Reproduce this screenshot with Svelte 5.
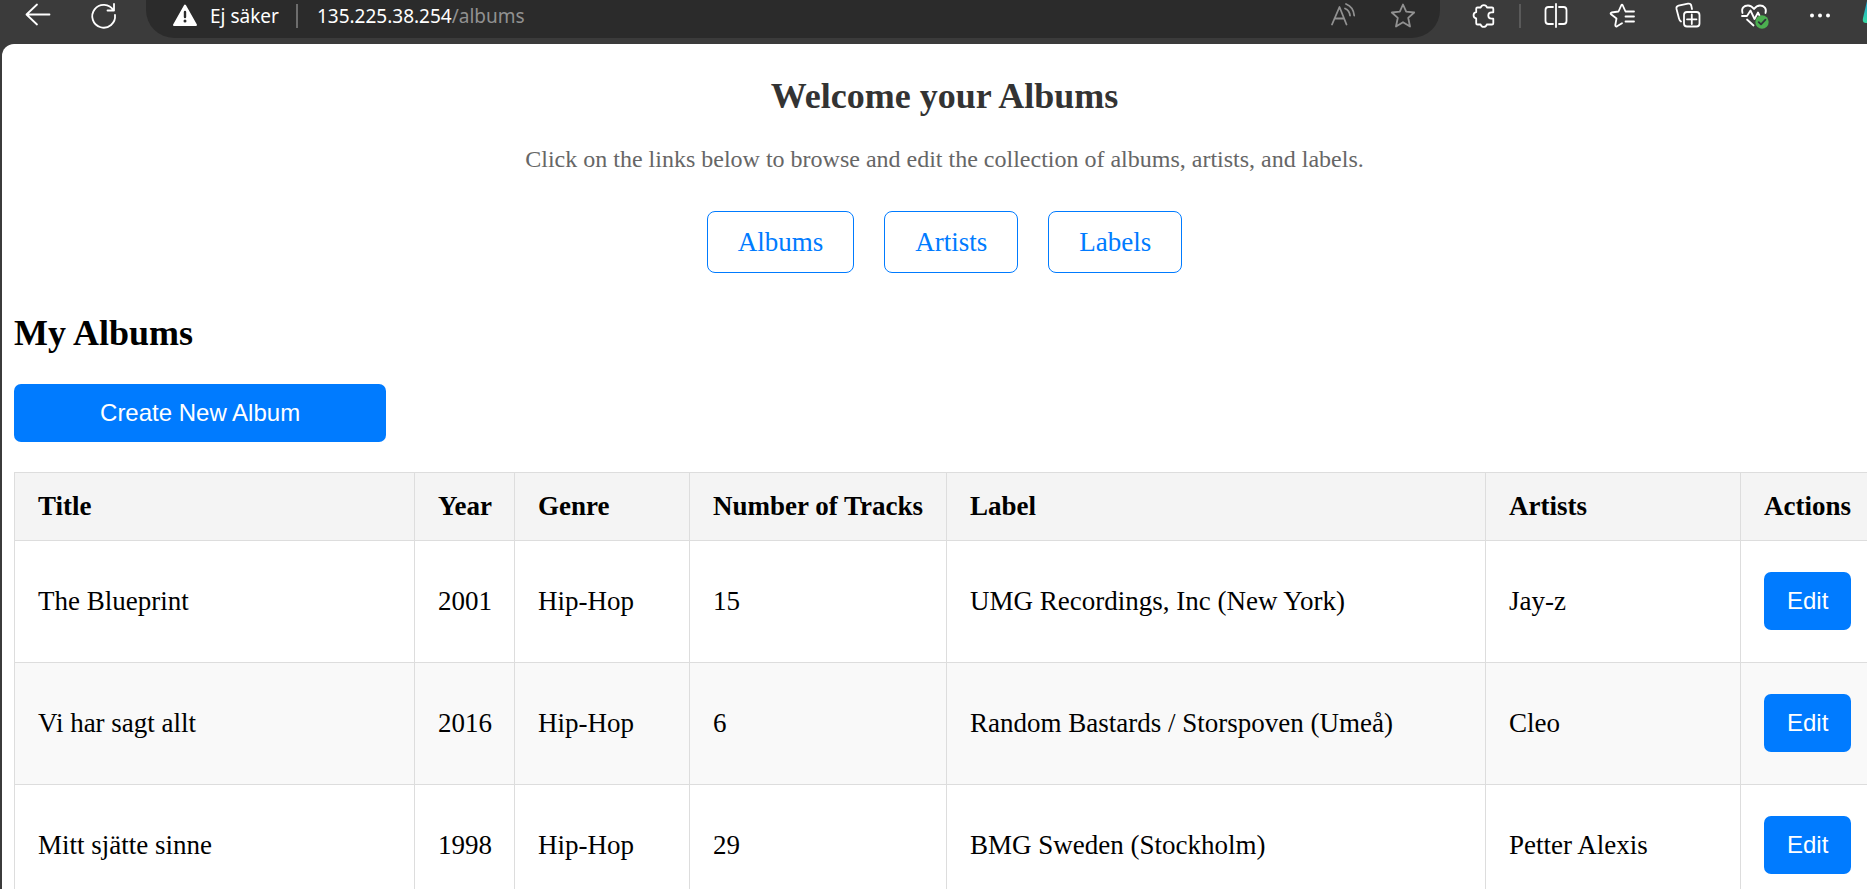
<script>
  const links = ['Albums', 'Artists', 'Labels'];
  const columns = ['Title', 'Year', 'Genre', 'Number of Tracks', 'Label', 'Artists', 'Actions'];
  const albums = [
    { title: 'The Blueprint', year: 2001, genre: 'Hip-Hop', tracks: 15, label: 'UMG Recordings, Inc (New York)', artists: 'Jay-z' },
    { title: 'Vi har sagt allt', year: 2016, genre: 'Hip-Hop', tracks: 6, label: 'Random Bastards / Storspoven (Umeå)', artists: 'Cleo' },
    { title: 'Mitt sjätte sinne', year: 1998, genre: 'Hip-Hop', tracks: 29, label: 'BMG Sweden (Stockholm)', artists: 'Petter Alexis' }
  ];
</script>

<div class="browser">
  <header class="toolbar">
    <button class="tool back" aria-label="Back">
      <svg width="30" height="30" viewBox="0 0 30 30"><path d="M27.500 14.500H4.500M15 4.500l-10.500 10L15 24.500" /></svg>
    </button>
    <button class="tool reload" aria-label="Reload">
      <svg width="30" height="30" viewBox="0 0 30 30"><path d="M25.500 10.500A11.400 11.400 0 1 0 27 15M26 4v6.500H19.500" /></svg>
    </button>
    <div class="address">
      <svg class="warning" width="26" height="26" viewBox="0 0 26 26">
        <path d="M13 4.500 24 24H2Z" fill="#fff" stroke="#fff" stroke-width="2" />
        <path d="M13 11v5" stroke="#2b2b2b" stroke-width="2.400" />
        <circle cx="13" cy="20" r="1.500" fill="#2b2b2b" stroke="none" />
      </svg>
      <span class="security">Ej säker</span>
      <span class="divider"></span>
      <span class="url">135.225.38.254<span class="path">/albums</span></span>
      <button class="tool read" aria-label="Read aloud">
        <svg width="30" height="30" viewBox="0 0 30 30"><path d="M4 24.500 11.500 7 18.500 24.500M6.500 18.500h9.500M17 8.500q4.500 2 5 7M18 4q7.500 3 8.200 11.500" /></svg>
      </button>
      <button class="tool" aria-label="Add to favorites">
        <svg width="30" height="30" viewBox="0 0 30 30"><path d="m15 4.500 3.200 7.200 8 .8-6 5.300 1.800 8.700-7-4.300-7 4.300 1.800-8.700-6-5.300 8-.8Z" /></svg>
      </button>
    </div>
    <div class="tools">
      <button class="tool" aria-label="Extensions">
        <svg width="30" height="30" viewBox="0 0 30 30"><path d="M9.500 7.500H12.700A3.300 3.300 0 0 1 19 7.500H24a1.300 1.300 0 0 1 1.300 1.300V12.300H23.500a3.200 3.200 0 0 0 0 6.400h1.800V23.200A1.300 1.300 0 0 1 24 24.500H18.800a3.200 3.200 0 0 1-6.200 0H9.500A1.300 1.300 0 0 1 8.200 23.200V18.500a3.200 3.200 0 0 1 0-6.300V8.800A1.300 1.300 0 0 1 9.500 7.500Z" /></svg>
      </button>
      <span class="divider tools-divider"></span>
      <button class="tool" aria-label="Split screen">
        <svg width="30" height="30" viewBox="0 0 30 30"><path d="M15 4v23M12 7H7.500a3 3 0 0 0-3 3v11a3 3 0 0 0 3 3H12M18 7h4.500a3 3 0 0 1 3 3v11a3 3 0 0 1-3 3H18" /></svg>
      </button>
      <button class="tool" aria-label="Favorites">
        <svg width="30" height="30" viewBox="0 0 30 30"><path d="M27 11.500H18.500L15.800 5.500Q15 4 14.200 5.500L11.500 11.500 4.500 12.500Q3 13 4 14.200L9.500 18.500 8.300 25Q8.300 27 10 26.300L15 23.300M18.500 16.500H27M18.500 21.500H27" /></svg>
      </button>
      <button class="tool" aria-label="Collections">
        <svg width="30" height="30" viewBox="0 0 30 30"><path d="M8 21.500q-1.500-1-2-3L3.500 9q-.5-2.500 2-3.300L15 3.700q2.800-.4 3.300 2l.7 3.300M18.800 14.500v9.500M14 19.300h9.500" /><rect x="11" y="12" width="15.500" height="14.500" rx="3" /></svg>
      </button>
      <button class="tool" aria-label="Browser essentials">
        <svg width="30" height="30" viewBox="0 0 30 30"><path d="M3.500 13C2 8 5 5.500 9 5.500c3 0 4.500 1.500 6 3.500C16.500 7 18 5.500 21 5.500c4 0 7 3 5.500 7.500M3 16h5l3.500-5.500 4 8.500 3.500-6.500 1.500 3M8 19.500l6.500 6" /><circle cx="23" cy="22" r="6.700" fill="#4caf50" stroke="none" /><path d="m19.700 22.200 2.300 2.200 4.500-4.800" stroke="#30333a" /></svg>
      </button>
      <button class="tool" aria-label="Settings and more">
        <svg width="30" height="30" viewBox="0 0 30 30"><g fill="#fff" stroke="none"><circle cx="7" cy="15.500" r="2" /><circle cx="15" cy="15.500" r="2" /><circle cx="23" cy="15.500" r="2" /></g></svg>
      </button>
      <button class="tool copilot" aria-label="Copilot">
        <svg width="30" height="30" viewBox="0 0 30 30"><defs><linearGradient id="pilot" x2="0" y2="1"><stop stop-color="#1ba5d8" /><stop offset="1" stop-color="#36d9a0" /></linearGradient></defs><path d="M8 1h14l-5 22H7q-4 0-3-5Z" fill="url(#pilot)" stroke="none" /></svg>
      </button>
    </div>
  </header>

  <main>
    <section class="intro">
      <h1>Welcome your Albums</h1>
      <p>Click on the links below to browse and edit the collection of albums, artists, and labels.</p>
      <nav>
        {#each links as link}
          <a href="#{link.toLowerCase()}">{link}</a>
        {/each}
      </nav>
    </section>

    <h2>My Albums</h2>
    <button class="action create">Create New Album</button>

    <table>
      <colgroup>
        <col class="c-title" /><col class="c-year" /><col class="c-genre" /><col class="c-tracks" /><col /><col class="c-artists" /><col class="c-actions" />
      </colgroup>
      <thead>
        <tr>
          {#each columns as column}<th>{column}</th>{/each}
        </tr>
      </thead>
      <tbody>
        {#each albums as album}
          <tr>
            <td>{album.title}</td>
            <td>{album.year}</td>
            <td>{album.genre}</td>
            <td>{album.tracks}</td>
            <td>{album.label}</td>
            <td>{album.artists}</td>
            <td class="edit"><button class="action">Edit</button></td>
          </tr>
        {/each}
      </tbody>
    </table>
  </main>
</div>

<style>
  :global(body) {
    margin: 0;
    background: #3b3b3b;
    overflow: hidden;
  }

  .browser {
    box-sizing: border-box;
    /* The content is slightly wider than the window */
    width: calc(100% + 20px);
    height: 100vh;
    overflow: hidden;
    background: #3b3b3b;
    padding-left: 2px;
    font-family: 'Liberation Serif', 'Times New Roman', serif;
  }

  .toolbar {
    display: flex;
    height: 44px;
    color: #fff;
    font: 19px/32px 'Noto Sans', 'Open Sans', sans-serif;
  }

  .tool {
    display: block;
    flex: none;
    width: 30px;
    height: 30px;
    padding: 0;
    border: 0;
    background: none;
    color: inherit;
  }

  svg {
    display: block;
    fill: none;
    stroke: currentColor;
    stroke-width: 1.8;
    stroke-linecap: round;
    stroke-linejoin: round;
  }

  .back {
    margin-left: 20px;
  }

  .reload {
    margin-left: 36px;
  }

  .address {
    box-sizing: border-box;
    display: flex;
    flex: 1;
    height: 38px;
    margin-left: 28px;
    padding: 0 22px 0 24px;
    border-radius: 0 0 28px 28px;
    background: #2b2b2b;
  }

  .warning {
    flex: none;
    margin: 1px 12px 0 2px;
  }

  .security,
  .url {
    white-space: nowrap;
  }

  .divider {
    flex: none;
    width: 2px;
    height: 24px;
    margin: 4px 19px 0 17px;
    background: #6d6d6d;
  }

  .url {
    flex: 1;
  }

  .path {
    color: #919191;
  }

  .address .tool {
    color: #919191;
  }

  .read {
    margin-right: 30px;
  }

  .tools {
    display: flex;
    gap: 36px;
    width: 447px;
    padding-left: 28px;
    box-sizing: border-box;
  }

  .tools-divider {
    margin: 4px -16px 0 -15px;
    background: #5a5a5a;
  }

  .copilot {
    margin-left: -12px;
  }

  main {
    padding: 31px 12px 0;
    min-height: 100%;
    box-sizing: border-box;
    border-top-left-radius: 12px;
    background: #fff;
  }

  .intro {
    text-align: center;
  }

  h1,
  h2 {
    margin: 0;
    font-size: 36px;
    line-height: 42px;
  }

  h1 {
    color: #333;
  }

  p {
    margin: 27px 0 37px;
    color: #666;
    font-size: 24px;
    line-height: 30px;
  }

  nav {
    display: flex;
    justify-content: center;
    gap: 30px;
  }

  nav a {
    padding: 15px 30px;
    border: 1px solid #007bff;
    border-radius: 8px;
    color: #007bff;
    font-size: 27px;
    line-height: 30px;
    text-decoration: none;
  }

  h2 {
    margin-top: 39px;
  }

  .action {
    display: block;
    padding: 14px 23px;
    border: 0;
    border-radius: 7px;
    background: #007bff;
    color: #fff;
    font: 24px/30px 'Liberation Sans', Arial, sans-serif;
  }

  .create {
    width: 20%;
    margin: 30px 0;
  }

  table {
    width: 100%;
    border-collapse: collapse;
    table-layout: fixed;
  }

  .c-title {
    width: 400px;
  }

  .c-year {
    width: 100px;
  }

  .c-genre {
    width: 175px;
  }

  .c-tracks {
    width: 257px;
  }

  .c-artists {
    width: 255px;
  }

  .c-actions {
    width: 134px;
  }

  th,
  td {
    box-sizing: border-box;
    padding: 0 22px 0 23px;
    border: 1px solid #ddd;
    font-size: 27px;
    text-align: left;
    white-space: nowrap;
  }

  th {
    height: 68px;
    background: #f4f4f4;
  }

  td {
    height: 122px;
  }

  .edit {
    padding-bottom: 2px;
  }

  tbody tr:nth-child(even) {
    background: #f9f9f9;
  }
</style>
